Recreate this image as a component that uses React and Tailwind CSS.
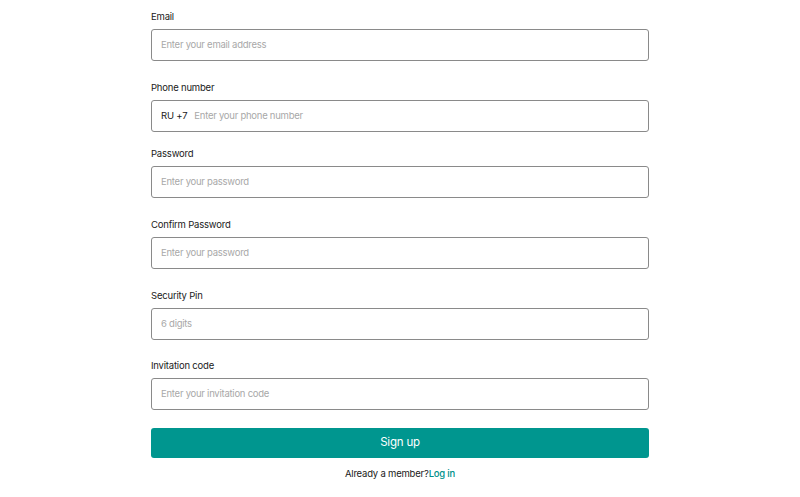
import { useState } from 'react';

const fields = [
  { label: 'Email', placeholder: 'Enter your email address', type: 'email', mb: 'mb-[20px]' },
  { label: 'Phone number', placeholder: 'Enter your phone number', type: 'tel', prefix: 'RU +7', mb: 'mb-[15px]' },
  { label: 'Password', placeholder: 'Enter your password', type: 'password', mb: 'mb-[20px]' },
  { label: 'Confirm Password', placeholder: 'Enter your password', type: 'password', mb: 'mb-[20px]' },
  { label: 'Security Pin', placeholder: '6 digits', type: 'text', mb: 'mb-[19px]' },
  { label: 'Invitation code', placeholder: 'Enter your invitation code', type: 'text', mb: 'mb-[18px]' },
];

function Field({ label, placeholder, type, prefix, mb }) {
  const [value, setValue] = useState('');
  return (
    <div className={mb}>
      <label className="block text-[9.5px] tracking-[-0.2px] leading-[13px] text-[#1a1a1a] mb-[6px]">{label}</label>
      <div className="flex items-center h-[32px] border border-[#8a8a8a] rounded-[3px] px-[9px]">
        {prefix && <span className="text-[9.5px] tracking-[-0.2px] text-[#1a1a1a] mr-[7px]">{prefix}</span>}
        <input
          type={type === 'password' ? 'text' : type}
          value={value}
          onChange={e => setValue(e.target.value)}
          placeholder={placeholder}
          className="flex-1 bg-transparent outline-none text-[9.5px] tracking-[-0.25px] text-[#1a1a1a] placeholder:text-[#a8a8a8]"
        />
      </div>
    </div>
  );
}

export default function App() {
  return (
    <div className="min-h-screen bg-white font-['Inter',sans-serif]">
      <form className="w-[498px] mx-auto pt-[10px]" onSubmit={e => e.preventDefault()}>
        {fields.map(f => <Field key={f.label} {...f} />)}
        <button type="submit"
          className="w-full h-[30px] rounded-[3px] bg-[#00968f] text-white text-[11.5px] tracking-[-0.2px]">
          Sign up
        </button>
        <p className="text-center text-[9.5px] tracking-[-0.2px] text-[#1a1a1a] mt-[9px]">
          Already a member?<a href="#" className="text-[#00908a] font-medium">Log in</a>
        </p>
      </form>
    </div>
  );
}
